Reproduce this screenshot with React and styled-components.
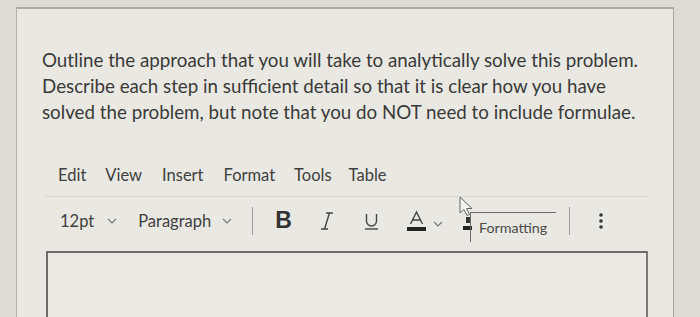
import React from 'react';
import styled, { createGlobalStyle } from 'styled-components';

const GlobalStyle = createGlobalStyle`
  html, body {
    margin: 0;
    padding: 0;
    background: #dcdbd6;
  }
  body {
    font-family: Lato, "Open Sans", sans-serif;
    color: #3d3d3b;
  }
`;

const Page = styled.div`
  width: 700px;
  height: 317px;
  overflow: hidden;
  padding: 7px 26px 0 16px;
  box-sizing: border-box;
`;

const Panel = styled.section`
  height: 100%;
  background: #e9e8e3;
  border-top: 2px solid #acaba6;
  border-left: 1px solid #b2b1ac;
  border-right: 1px solid #a9a8a3;
  box-sizing: border-box;
`;

const Prompt = styled.p`
  margin: 0;
  padding: 38px 10px 0 25px;
  font-size: 18.75px;
  line-height: 26px;
  color: #3a3a38;
  white-space: nowrap;
`;

const Editor = styled.div`
  margin: 40px 25px 0 28px;
`;

const MenuBar = styled.nav`
  display: flex;
  padding: 0 0 11px 13px;
  border-bottom: 1px solid #d6d5d0;
`;

const MenuItem = styled.span`
  font-size: 16.5px;
  line-height: 20px;
  color: #404040;
  margin-right: ${p => p.$gap}px;
`;

const Toolbar = styled.div`
  position: relative;
  display: flex;
  align-items: center;
  height: 54px;
  padding: 0 0 7px 15px;
  box-sizing: border-box;
`;

const Dropdown = styled.span`
  display: flex;
  align-items: center;
  gap: ${p => p.$inner}px;
  font-size: 16.5px;
  color: #414141;
  margin-right: ${p => p.$gap}px;
`;

const Divider = styled.span`
  width: 1px;
  height: 28px;
  background: #9e9d99;
  margin-right: ${p => p.$right}px;
`;

const ToolButton = styled.span`
  display: flex;
  align-items: center;
  margin-right: ${p => p.$gap}px;
  color: #333;
`;

const Bold = styled.span`
  font-family: "Liberation Sans", Arial, sans-serif;
  font-weight: 700;
  font-size: 23px;
  color: #333;
`;

const Tooltip = styled.div`
  position: absolute;
  left: 425px;
  top: 15px;
  width: 86px;
  height: 30px;
  border-top: 1px solid #6b6a66;
  border-left: 1px solid #6b6a66;
  box-sizing: border-box;
  padding: 6px 0 0 8px;
  font-size: 14.3px;
  color: #4a4a48;
`;

const Cursor = styled.svg`
  position: absolute;
  left: 414px;
  top: -1px;
`;

const TextBox = styled.div`
  margin-left: 1px;
  height: 80px;
  border: 2px solid #6c6b67;
  border-right-color: #7a7975;
  background: #eae9e4;
`;

const Chevron = () => (
  <svg width="10" height="6" viewBox="0 0 10 6">
    <path d="M1 1l4 4 4-4" fill="none" stroke="#7a7a78" strokeWidth="1.2" />
  </svg>
);

const App = () => (
  <>
    <GlobalStyle />
    <Page>
      <Panel>
        <Prompt>
          Outline the approach that you will take to analytically solve this problem.
          <br />
          Describe each step in sufficient detail so that it is clear how you have
          <br />
          solved the problem, but note that you do NOT need to include formulae.
        </Prompt>
        <Editor>
          <MenuBar>
            <MenuItem $gap={19}>Edit</MenuItem>
            <MenuItem $gap={20}>View</MenuItem>
            <MenuItem $gap={20}>Insert</MenuItem>
            <MenuItem $gap={19}>Format</MenuItem>
            <MenuItem $gap={17}>Tools</MenuItem>
            <MenuItem $gap={0}>Table</MenuItem>
          </MenuBar>
          <Toolbar>
            <Dropdown $inner={13} $gap={21}>12pt <Chevron /></Dropdown>
            <Dropdown $inner={11} $gap={20}>Paragraph <Chevron /></Dropdown>
            <Divider $right={22} />
            <ToolButton $gap={28}><Bold>B</Bold></ToolButton>
            <ToolButton $gap={30}>
              <svg width="14" height="20" viewBox="0 0 14 20">
                <path d="M6 2h7M1 18h7M9.5 2L4.5 18" fill="none" stroke="#444" strokeWidth="1.4" />
              </svg>
            </ToolButton>
            <ToolButton $gap={28}>
              <svg width="15" height="20" viewBox="0 0 15 20">
                <path d="M2.5 3v7a5 5 0 0 0 10 0V3" fill="none" stroke="#444" strokeWidth="1.4" />
                <path d="M1 18h13" stroke="#444" strokeWidth="1.4" />
              </svg>
            </ToolButton>
            <ToolButton $gap={20}>
              <svg width="19" height="22" viewBox="0 0 19 22">
                <path d="M3.5 14L9.5 2l6 12M6 10h7" fill="none" stroke="#444" strokeWidth="1.4" />
                <rect x="0" y="17" width="19" height="4" fill="#222" />
              </svg>
              <span style={{ marginLeft: 7 }}><Chevron /></span>
            </ToolButton>
            <ToolButton $gap={97}>
              <svg width="9" height="22" viewBox="0 0 9 22">
                <path d="M3 7h4v6H3z" fill="#333" />
                <rect x="0" y="16" width="9" height="4" fill="#222" />
              </svg>
            </ToolButton>
            <Divider $right={29} />
            <ToolButton $gap={0}>
              <svg width="4" height="18" viewBox="0 0 4 18">
                <circle cx="2" cy="3" r="1.8" fill="#333" />
                <circle cx="2" cy="9" r="1.8" fill="#333" />
                <circle cx="2" cy="15" r="1.8" fill="#333" />
              </svg>
            </ToolButton>
            <Tooltip>Formatting</Tooltip>
            <Cursor width="14" height="22" viewBox="0 0 14 22">
              <path d="M1 1v16l4-3.5 3 6 2.5-1-3-6h5.5z" fill="#f2f2ef" stroke="#666" strokeWidth="1" />
            </Cursor>
          </Toolbar>
          <TextBox />
        </Editor>
      </Panel>
    </Page>
  </>
);

export default App;
